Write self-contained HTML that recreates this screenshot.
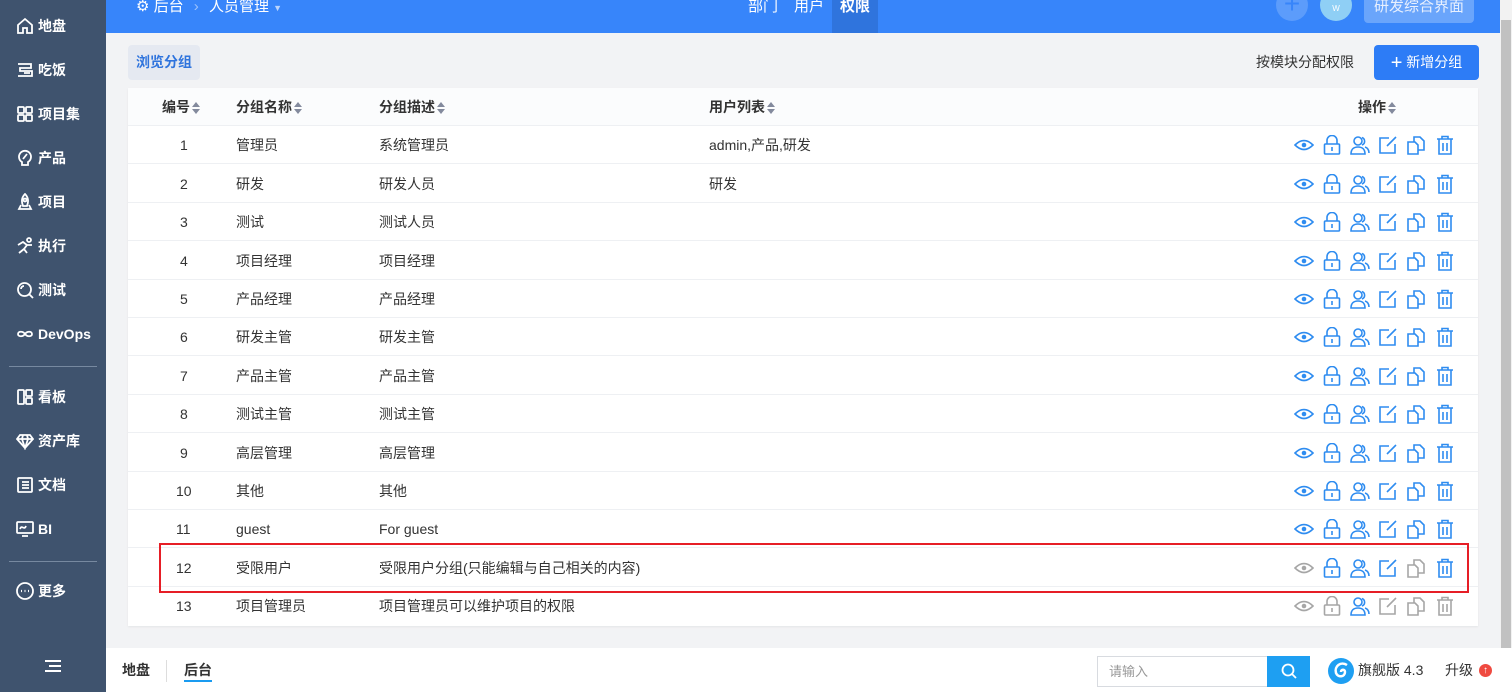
<!DOCTYPE html>
<html><head><meta charset="utf-8"><style>
*{box-sizing:border-box;margin:0;padding:0}
body{width:1512px;height:692px;overflow:hidden;font-family:"Liberation Sans","Noto Sans CJK SC",sans-serif;font-size:14px;color:#333;background:#f2f3f5;position:relative}
.side{position:absolute;left:0;top:0;width:106px;height:692px;background:#3f536e;color:#fff}
.side .it{position:absolute;left:16px;height:24px;display:flex;align-items:center;font-size:14px;font-weight:bold}
.side .it svg{width:18px;height:18px;margin-right:4px;fill:none;stroke:#fff;stroke-width:1.8}
.side hr{position:absolute;left:9px;width:88px;border:0;border-top:1px solid #7789a0}
.top{position:absolute;left:106px;top:0;width:1394px;height:33px;background:#3785fa;color:#fff}
.main{position:absolute;left:128px;top:88px;width:1350px;height:538px;background:#fff;box-shadow:0 1px 2px rgba(0,0,0,.06)}
.row{position:absolute;left:0;width:1350px;height:38px;border-bottom:1px solid #eef0f3}
.row span{position:absolute;top:0;line-height:38px;font-size:14px}
.hd span{font-weight:bold;color:#333}
.sort{display:inline-block;vertical-align:middle;margin-left:2px;width:8px;height:12px;position:relative}
.sort:before,.sort:after{content:"";position:absolute;left:0;border-left:4px solid transparent;border-right:4px solid transparent}
.sort:before{top:0;border-bottom:5px solid #838a9d}.sort:after{bottom:0;border-top:5px solid #838a9d}
.ic{position:absolute;top:9px;width:20px;height:20px;fill:none;stroke:#2e8cf0;stroke-width:1.6}
.g{stroke:#a6a6a6}
.foot{position:absolute;left:106px;top:648px;width:1406px;height:44px;background:#fff}
</style></head><body>
<svg width="0" height="0" style="position:absolute">
<defs>
<g id="eye"><path d="M1 10 Q10 1 19 10 Q10 19 1 10Z"/><circle cx="10" cy="10" r="2.3" fill="currentColor" stroke="none"/></g>
<g id="lock"><path d="M5 9V5.5a5 5 0 0 1 10 0V9"/><rect x="2.5" y="9" width="15" height="10" rx="1"/><path d="M10 12v4"/></g>
<g id="user"><circle cx="8" cy="6" r="4"/><path d="M1 19c0-5 3-7 7-7s7 2 7 7z"/><path d="M12 2.5a4 4 0 0 1 0 7.5M15 12c3 1 4 3 4 6"/></g>
<g id="edit"><path d="M17 9v9H2V3h9"/><path d="M9 11L18 2"/></g>
<g id="copy"><path d="M2 7h7l3 3v9H2z"/><path d="M8 7V2h6l4 4v9h-6"/></g>
<g id="del"><path d="M2 4h16M7 4V1.5h6V4M4 4v15h12V4M8 8v8M12 8v8"/></g>
</defs></svg>

<div class="side">
<div class="it" style="top:14px"><svg viewBox="0 0 18 18"><path d="M2 8L9 2l7 6v8h-5v-5H7v5H2z"/></svg>地盘</div>
<div class="it" style="top:58px"><svg viewBox="0 0 18 18"><path d="M2 3h13v4H4v3h12v5H2M8 12h6"/></svg>吃饭</div>
<div class="it" style="top:102px"><svg viewBox="0 0 18 18"><rect x="2" y="2" width="6" height="6" rx="1"/><rect x="10" y="2" width="6" height="6" rx="1"/><rect x="2" y="10" width="6" height="6" rx="1"/><rect x="10" y="10" width="6" height="6" rx="1"/></svg>项目集</div>
<div class="it" style="top:146px"><svg viewBox="0 0 18 18"><path d="M6 13a6 6 0 1 1 6 0v3H6zM11 5L7 10"/></svg>产品</div>
<div class="it" style="top:190px"><svg viewBox="0 0 18 18"><path d="M9 1c3 3 4 7 2 12H7C5 8 6 4 9 1zM5 12l-2 4h12l-2-4"/><circle cx="9" cy="7" r="1.5"/></svg>项目</div>
<div class="it" style="top:234px"><svg viewBox="0 0 18 18"><circle cx="13" cy="3" r="2"/><path d="M2 8l5-3 4 3-3 4 3 4M8 12l-5 4M11 8h5"/></svg>执行</div>
<div class="it" style="top:278px"><svg viewBox="0 0 18 18"><circle cx="8.5" cy="8.5" r="6.5"/><path d="M13 13l4 4M5 8a3 3 0 0 1 3-3"/></svg>测试</div>
<div class="it" style="top:322px"><svg viewBox="0 0 18 18"><path d="M9 9c-2-3-7-3-7 0s5 3 7 0 7-3 7 0-5 3-7 0"/></svg>DevOps</div>
<hr style="top:366px">
<div class="it" style="top:385px"><svg viewBox="0 0 18 18"><rect x="2" y="2" width="6" height="14" rx="1"/><rect x="10" y="2" width="6" height="6" rx="1"/><rect x="10" y="10" width="6" height="6" rx="1"/></svg>看板</div>
<div class="it" style="top:429px"><svg viewBox="0 0 18 18"><path d="M1 7l3-4h10l3 4-8 9zM1 7h16M7 3l-1 4 3 9 3-9-1-4"/></svg>资产库</div>
<div class="it" style="top:473px"><svg viewBox="0 0 18 18"><rect x="2" y="2" width="14" height="14" rx="1"/><path d="M6 6h7M6 9h7M6 12h7"/></svg>文档</div>
<div class="it" style="top:517px"><svg viewBox="0 0 18 18"><rect x="1" y="2" width="16" height="11" rx="1"/><path d="M4 9c2-5 4 2 6-3M6 16h6"/></svg>BI</div>
<hr style="top:561px">
<div class="it" style="top:579px"><svg viewBox="0 0 18 18"><circle cx="9" cy="9" r="8"/><path d="M5 9h1M8.5 9h1M12 9h1" stroke-width="2.2"/></svg>更多</div>
<div style="position:absolute;left:45px;top:660px;width:16px;height:12px;border-top:2px solid #fff;border-bottom:2px solid #fff"><div style="margin:3px 0 0 4px;width:12px;border-top:2px solid #fff"></div></div>
</div>

<div class="top">
<div style="position:absolute;left:30px;top:0;font-size:15px;line-height:14px">⚙ 后台 <span style="margin:0 6px;color:#9cc2fd">›</span> 人员管理 <span style="font-size:9px;color:#bcd5fc">▼</span></div>
<div style="position:absolute;left:642px;top:0;font-size:15px;line-height:14px">部门</div>
<div style="position:absolute;left:688px;top:0;font-size:15px;line-height:14px">用户</div>
<div style="position:absolute;left:726px;top:0;width:46px;height:33px;background:#2f74dd;font-size:15px;line-height:14px;font-weight:bold;text-align:center">权限</div>
<div style="position:absolute;left:1170px;top:-11px;width:32px;height:32px;border-radius:50%;background:#5c9cfb;color:#3785fa;text-align:center;font-size:28px;line-height:30px">+</div>
<div style="position:absolute;left:1214px;top:-11px;width:32px;height:32px;border-radius:50%;background:#8fcff5;color:#fff;text-align:center;font-size:8px;line-height:40px">W</div>
<div style="position:absolute;left:1258px;top:-6px;width:110px;height:29px;border-radius:4px;background:#6aa5fb;color:#e8f0fe;text-align:center;font-size:15px;line-height:26px">研发综合界面</div>
</div>
<div style="position:absolute;left:1500px;top:0;width:12px;height:648px;background:#f2f2f2"><div style="position:absolute;left:1px;top:20px;width:10px;height:628px;background:#c1c1c1"></div></div>

<div style="position:absolute;left:128px;top:45px;width:72px;height:35px;background:#e5e9f1;border-radius:4px;color:#2f74dd;font-weight:bold;line-height:35px;text-align:center">浏览分组</div>
<div style="position:absolute;left:1256px;top:45px;line-height:35px;color:#333">按模块分配权限</div>
<div style="position:absolute;left:1374px;top:45px;width:105px;height:35px;background:#2d7cf6;border-radius:4px;color:#fff;line-height:35px;text-align:center"><span style="font-size:20px;vertical-align:-2px">+</span> 新增分组</div>

<div class="main">
<div class="row hd" style="top:0;background:#fbfcfd"><span style="left:34px">编号<i class="sort"></i></span><span style="left:108px">分组名称<i class="sort"></i></span><span style="left:251px">分组描述<i class="sort"></i></span><span style="left:581px">用户列表<i class="sort"></i></span><span style="left:1230px">操作<i class="sort"></i></span></div>

<div class="row" style="top:38.4px"><span style="left:52px">1</span><span style="left:108px">管理员</span><span style="left:251px">系统管理员</span><span style="left:581px">admin,产品,研发</span>
<svg class="ic" style="left:1166px" viewBox="0 0 20 20" color="#2e8cf0"><use href="#eye"/></svg><svg class="ic" style="left:1194px" viewBox="0 0 20 20"><use href="#lock"/></svg><svg class="ic" style="left:1222px" viewBox="0 0 20 20"><use href="#user"/></svg><svg class="ic" style="left:1250px" viewBox="0 0 20 20"><use href="#edit"/></svg><svg class="ic" style="left:1278px" viewBox="0 0 20 20"><use href="#copy"/></svg><svg class="ic" style="left:1307px" viewBox="0 0 20 20"><use href="#del"/></svg></div>

<div class="row" style="top:76.8px"><span style="left:52px">2</span><span style="left:108px">研发</span><span style="left:251px">研发人员</span><span style="left:581px">研发</span>
<svg class="ic" style="left:1166px" viewBox="0 0 20 20" color="#2e8cf0"><use href="#eye"/></svg><svg class="ic" style="left:1194px" viewBox="0 0 20 20"><use href="#lock"/></svg><svg class="ic" style="left:1222px" viewBox="0 0 20 20"><use href="#user"/></svg><svg class="ic" style="left:1250px" viewBox="0 0 20 20"><use href="#edit"/></svg><svg class="ic" style="left:1278px" viewBox="0 0 20 20"><use href="#copy"/></svg><svg class="ic" style="left:1307px" viewBox="0 0 20 20"><use href="#del"/></svg></div>

<div class="row" style="top:115.2px"><span style="left:52px">3</span><span style="left:108px">测试</span><span style="left:251px">测试人员</span>
<svg class="ic" style="left:1166px" viewBox="0 0 20 20" color="#2e8cf0"><use href="#eye"/></svg><svg class="ic" style="left:1194px" viewBox="0 0 20 20"><use href="#lock"/></svg><svg class="ic" style="left:1222px" viewBox="0 0 20 20"><use href="#user"/></svg><svg class="ic" style="left:1250px" viewBox="0 0 20 20"><use href="#edit"/></svg><svg class="ic" style="left:1278px" viewBox="0 0 20 20"><use href="#copy"/></svg><svg class="ic" style="left:1307px" viewBox="0 0 20 20"><use href="#del"/></svg></div>

<div class="row" style="top:153.6px"><span style="left:52px">4</span><span style="left:108px">项目经理</span><span style="left:251px">项目经理</span>
<svg class="ic" style="left:1166px" viewBox="0 0 20 20" color="#2e8cf0"><use href="#eye"/></svg><svg class="ic" style="left:1194px" viewBox="0 0 20 20"><use href="#lock"/></svg><svg class="ic" style="left:1222px" viewBox="0 0 20 20"><use href="#user"/></svg><svg class="ic" style="left:1250px" viewBox="0 0 20 20"><use href="#edit"/></svg><svg class="ic" style="left:1278px" viewBox="0 0 20 20"><use href="#copy"/></svg><svg class="ic" style="left:1307px" viewBox="0 0 20 20"><use href="#del"/></svg></div>

<div class="row" style="top:192px"><span style="left:52px">5</span><span style="left:108px">产品经理</span><span style="left:251px">产品经理</span>
<svg class="ic" style="left:1166px" viewBox="0 0 20 20" color="#2e8cf0"><use href="#eye"/></svg><svg class="ic" style="left:1194px" viewBox="0 0 20 20"><use href="#lock"/></svg><svg class="ic" style="left:1222px" viewBox="0 0 20 20"><use href="#user"/></svg><svg class="ic" style="left:1250px" viewBox="0 0 20 20"><use href="#edit"/></svg><svg class="ic" style="left:1278px" viewBox="0 0 20 20"><use href="#copy"/></svg><svg class="ic" style="left:1307px" viewBox="0 0 20 20"><use href="#del"/></svg></div>

<div class="row" style="top:230.4px"><span style="left:52px">6</span><span style="left:108px">研发主管</span><span style="left:251px">研发主管</span>
<svg class="ic" style="left:1166px" viewBox="0 0 20 20" color="#2e8cf0"><use href="#eye"/></svg><svg class="ic" style="left:1194px" viewBox="0 0 20 20"><use href="#lock"/></svg><svg class="ic" style="left:1222px" viewBox="0 0 20 20"><use href="#user"/></svg><svg class="ic" style="left:1250px" viewBox="0 0 20 20"><use href="#edit"/></svg><svg class="ic" style="left:1278px" viewBox="0 0 20 20"><use href="#copy"/></svg><svg class="ic" style="left:1307px" viewBox="0 0 20 20"><use href="#del"/></svg></div>

<div class="row" style="top:268.8px"><span style="left:52px">7</span><span style="left:108px">产品主管</span><span style="left:251px">产品主管</span>
<svg class="ic" style="left:1166px" viewBox="0 0 20 20" color="#2e8cf0"><use href="#eye"/></svg><svg class="ic" style="left:1194px" viewBox="0 0 20 20"><use href="#lock"/></svg><svg class="ic" style="left:1222px" viewBox="0 0 20 20"><use href="#user"/></svg><svg class="ic" style="left:1250px" viewBox="0 0 20 20"><use href="#edit"/></svg><svg class="ic" style="left:1278px" viewBox="0 0 20 20"><use href="#copy"/></svg><svg class="ic" style="left:1307px" viewBox="0 0 20 20"><use href="#del"/></svg></div>

<div class="row" style="top:307.2px"><span style="left:52px">8</span><span style="left:108px">测试主管</span><span style="left:251px">测试主管</span>
<svg class="ic" style="left:1166px" viewBox="0 0 20 20" color="#2e8cf0"><use href="#eye"/></svg><svg class="ic" style="left:1194px" viewBox="0 0 20 20"><use href="#lock"/></svg><svg class="ic" style="left:1222px" viewBox="0 0 20 20"><use href="#user"/></svg><svg class="ic" style="left:1250px" viewBox="0 0 20 20"><use href="#edit"/></svg><svg class="ic" style="left:1278px" viewBox="0 0 20 20"><use href="#copy"/></svg><svg class="ic" style="left:1307px" viewBox="0 0 20 20"><use href="#del"/></svg></div>

<div class="row" style="top:345.6px"><span style="left:52px">9</span><span style="left:108px">高层管理</span><span style="left:251px">高层管理</span>
<svg class="ic" style="left:1166px" viewBox="0 0 20 20" color="#2e8cf0"><use href="#eye"/></svg><svg class="ic" style="left:1194px" viewBox="0 0 20 20"><use href="#lock"/></svg><svg class="ic" style="left:1222px" viewBox="0 0 20 20"><use href="#user"/></svg><svg class="ic" style="left:1250px" viewBox="0 0 20 20"><use href="#edit"/></svg><svg class="ic" style="left:1278px" viewBox="0 0 20 20"><use href="#copy"/></svg><svg class="ic" style="left:1307px" viewBox="0 0 20 20"><use href="#del"/></svg></div>

<div class="row" style="top:384px"><span style="left:48px">10</span><span style="left:108px">其他</span><span style="left:251px">其他</span>
<svg class="ic" style="left:1166px" viewBox="0 0 20 20" color="#2e8cf0"><use href="#eye"/></svg><svg class="ic" style="left:1194px" viewBox="0 0 20 20"><use href="#lock"/></svg><svg class="ic" style="left:1222px" viewBox="0 0 20 20"><use href="#user"/></svg><svg class="ic" style="left:1250px" viewBox="0 0 20 20"><use href="#edit"/></svg><svg class="ic" style="left:1278px" viewBox="0 0 20 20"><use href="#copy"/></svg><svg class="ic" style="left:1307px" viewBox="0 0 20 20"><use href="#del"/></svg></div>

<div class="row" style="top:422.4px"><span style="left:48px">11</span><span style="left:108px">guest</span><span style="left:251px">For guest</span>
<svg class="ic" style="left:1166px" viewBox="0 0 20 20" color="#2e8cf0"><use href="#eye"/></svg><svg class="ic" style="left:1194px" viewBox="0 0 20 20"><use href="#lock"/></svg><svg class="ic" style="left:1222px" viewBox="0 0 20 20"><use href="#user"/></svg><svg class="ic" style="left:1250px" viewBox="0 0 20 20"><use href="#edit"/></svg><svg class="ic" style="left:1278px" viewBox="0 0 20 20"><use href="#copy"/></svg><svg class="ic" style="left:1307px" viewBox="0 0 20 20"><use href="#del"/></svg></div>

<div class="row" style="top:460.8px"><span style="left:48px">12</span><span style="left:108px">受限用户</span><span style="left:251px">受限用户分组(只能编辑与自己相关的内容)</span>
<svg class="ic g" style="left:1166px" viewBox="0 0 20 20" color="#a6a6a6"><use href="#eye"/></svg><svg class="ic" style="left:1194px" viewBox="0 0 20 20"><use href="#lock"/></svg><svg class="ic" style="left:1222px" viewBox="0 0 20 20"><use href="#user"/></svg><svg class="ic" style="left:1250px" viewBox="0 0 20 20"><use href="#edit"/></svg><svg class="ic g" style="left:1278px" viewBox="0 0 20 20"><use href="#copy"/></svg><svg class="ic" style="left:1307px" viewBox="0 0 20 20"><use href="#del"/></svg></div>

<div class="row" style="top:499.2px;border:0"><span style="left:48px">13</span><span style="left:108px">项目管理员</span><span style="left:251px">项目管理员可以维护项目的权限</span>
<svg class="ic g" style="left:1166px" viewBox="0 0 20 20" color="#a6a6a6"><use href="#eye"/></svg><svg class="ic g" style="left:1194px" viewBox="0 0 20 20"><use href="#lock"/></svg><svg class="ic" style="left:1222px" viewBox="0 0 20 20"><use href="#user"/></svg><svg class="ic g" style="left:1250px" viewBox="0 0 20 20"><use href="#edit"/></svg><svg class="ic g" style="left:1278px" viewBox="0 0 20 20"><use href="#copy"/></svg><svg class="ic g" style="left:1307px" viewBox="0 0 20 20"><use href="#del"/></svg></div>
</div>
<div style="position:absolute;left:159px;top:543px;width:1310px;height:50px;border:2px solid #e61e26"></div>

<div class="foot">
<div style="position:absolute;left:16px;top:0;line-height:44px;font-weight:bold">地盘</div>
<div style="position:absolute;left:60px;top:12px;height:22px;border-left:1px solid #ddd"></div>
<div style="position:absolute;left:78px;top:0;line-height:44px;font-weight:bold">后台</div>
<div style="position:absolute;left:78px;top:32px;width:28px;border-top:2px solid #1a9bf0"></div>
<div style="position:absolute;left:991px;top:8px;width:171px;height:31px;border:1px solid #d8dbe0;color:#999;line-height:29px;padding-left:11px;font-size:13px">请输入</div>
<div style="position:absolute;left:1161px;top:8px;width:43px;height:31px;background:#1e9ff2"><svg width="43" height="31" viewBox="0 0 43 31" fill="none" stroke="#fff" stroke-width="1.8"><circle cx="21" cy="14" r="5.5"/><path d="M25 18l4 4"/></svg></div>
<div style="position:absolute;left:1222px;top:10px;width:26px;height:26px;border-radius:50%;background:#1e9ff2"><svg width="26" height="26" viewBox="0 0 26 26" fill="none" stroke="#fff" stroke-width="2.5"><path d="M19 7c-6-4-13 1-11 8 2 5 9 4 9-1 0-3-4-3-4 0"/></svg></div>
<div style="position:absolute;left:1252px;top:0;line-height:44px">旗舰版 4.3</div>
<div style="position:absolute;left:1339px;top:0;line-height:44px">升级</div>
<div style="position:absolute;left:1373px;top:16px;width:13px;height:13px;border-radius:50%;background:#ef4a40;color:#fff;font-size:10px;line-height:13px;text-align:center;font-weight:bold">↑</div>
</div>
</body></html>
